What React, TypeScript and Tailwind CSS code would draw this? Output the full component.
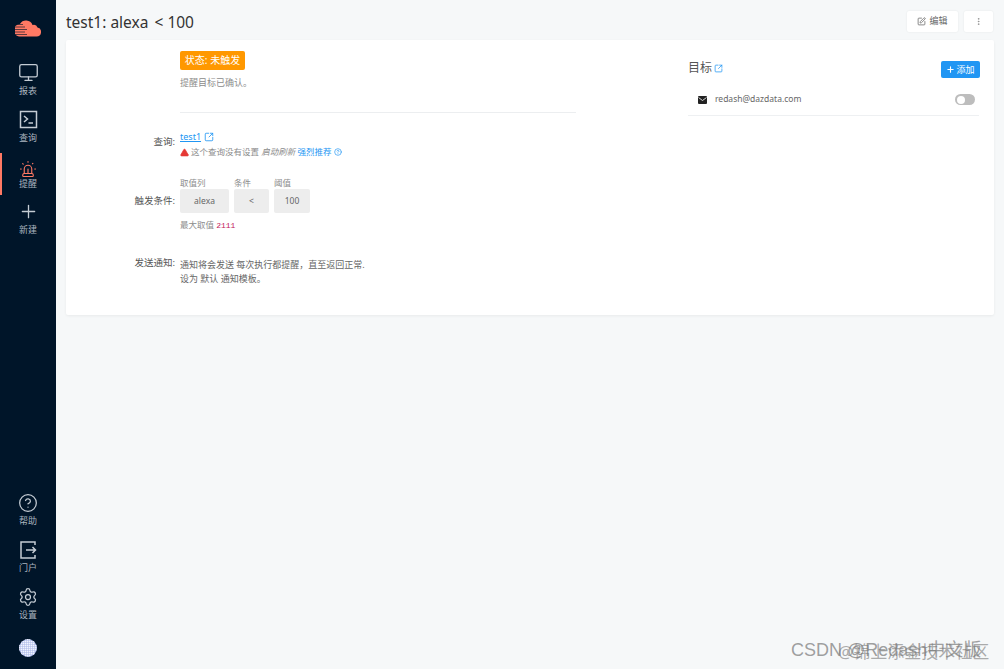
import { Monitor, Siren, Plus, CircleHelp, Settings, SquareArrowOutUpRight, SquarePen, EllipsisVertical, TriangleAlert } from 'lucide-react';

const font = { fontFamily: '"Noto Sans", "Noto Sans CJK SC", sans-serif' };

function CloudLogo() {
  return (
    <svg width="26" height="18" viewBox="0 0 26 18">
      <path d="M4 17.500h17.500a4.500 4.500 0 0 0 1-8.900 4 4 0 0 0-5-2.600A7 7 0 0 0 5 5a6.300 6.300 0 0 0-1 12.500z" fill="#ff7964" />
      <g stroke="#001529" strokeWidth="0.800" opacity="0.8">
        <path d="M0 5.500h8M0 8h10M0 10.500h12M0 13h10M0 15.500h12" />
      </g>
    </svg>
  );
}

function TerminalIcon() {
  return (
    <svg width="21" height="21" viewBox="0 0 21 21" fill="none" stroke="#c4ccd4" strokeWidth="1.500">
      <rect x="2.500" y="2.500" width="16" height="16" />
      <path d="M6 7l3.500 3L6 13M10.500 14H15" />
    </svg>
  );
}

function PortalIcon() {
  return (
    <svg width="20" height="20" viewBox="0 0 20 20" fill="none" stroke="#c4ccd4" strokeWidth="1.500">
      <path d="M17 5V2H3v16h14v-3" />
      <path d="M8 10h10M14.500 7l3 3-3 3" />
    </svg>
  );
}

function MailIcon() {
  return (
    <svg width="9" height="8" viewBox="0 0 9 8" className="shrink-0">
      <rect width="9" height="8" rx="1" fill="#222" />
      <path d="M0.500 1.500L4.500 4.500 8.500 1.500" fill="none" stroke="#fff" strokeWidth="0.800" />
    </svg>
  );
}

function Avatar() {
  const dots = [];
  for (let r = 0; r < 9; r++) {
    for (let c = 0; c < 9; c++) {
      const dx = c - 4;
      const dy = r - 4;
      if (dx * dx + dy * dy <= 18) dots.push(<rect key={`${r}-${c}`} x={c * 2} y={r * 2} width="1.500" height="1.500" fill="#f0f3ff" />);
    }
  }
  return (
    <div className="w-[18px] h-[18px] rounded-full bg-[#a9b6e6] overflow-hidden">
      <svg width="18" height="18" viewBox="0 0 18 18">{dots}</svg>
    </div>
  );
}

function NavItem({ icon, label, active, className }: { icon: React.ReactNode; label: string; active?: boolean; className?: string }) {
  return (
    <div className={`flex flex-col items-center justify-center border-l-2 pr-[2px] ${active ? 'border-[#ff7964]' : 'border-transparent'} ${className ?? 'h-[47px] gap-[2px]'}`}>
      {icon}
      <span className="text-[9px] leading-[11px] text-[#aab4bf]">{label}</span>
    </div>
  );
}

function FormRow({ label, className, labelClass, children }: { label: string; className?: string; labelClass?: string; children: React.ReactNode }) {
  return (
    <div className={`flex ${className ?? ''}`}>
      <div className={`w-[114px] pr-[5px] text-right text-[9.500px] text-[#555] ${labelClass ?? ''}`}>{label}</div>
      <div className="flex-1">{children}</div>
    </div>
  );
}

function ConditionBox({ title, value, width }: { title: string; value: string; width: string }) {
  return (
    <div className={width}>
      <div className="text-[8.500px] leading-[13px] text-[#8c8c8c]">{title}</div>
      <div className="h-[24px] bg-[#ededed] rounded-[2px] flex items-center justify-center text-[8.500px] text-[#666]">{value}</div>
    </div>
  );
}

export default function App() {
  return (
    <div className="relative flex w-[1004px] h-[669px] overflow-hidden bg-[#f6f8f9]" style={font}>
      <aside className="w-[56px] shrink-0 bg-[#001529] flex flex-col">
        <div className="h-[55px] flex items-center justify-center"><CloudLogo /></div>
        <NavItem icon={<Monitor size={21} strokeWidth={1.5} color="#c4ccd4" />} label="报表" />
        <NavItem icon={<TerminalIcon />} label="查询" />
        <NavItem active className="h-[42px] mt-[4px]" icon={<Siren size={18} strokeWidth={1.5} color="#ff7964" />} label="提醒" />
        <NavItem className="h-[46px] gap-[2px]" icon={<Plus size={21} strokeWidth={1.5} color="#c4ccd4" />} label="新建" />
        <div className="mt-auto">
          <NavItem icon={<CircleHelp size={20} strokeWidth={1.5} color="#c4ccd4" />} label="帮助" />
          <NavItem icon={<PortalIcon />} label="门户" />
          <NavItem icon={<Settings size={20} strokeWidth={1.5} color="#c4ccd4" />} label="设置" />
          <div className="h-[42px] flex items-center justify-center"><Avatar /></div>
        </div>
      </aside>

      <main className="flex-1 pl-[10px] pr-[10px]">
        <header className="h-[40px] flex items-center justify-between">
          <h1 className="pt-[6px] text-[15.500px] font-normal text-[#333]">test1: alexa<span className="ml-[2px]"> &lt; </span>100</h1>
          <div className="flex gap-[6px] pt-[2px] mr-[1px]">
            <div className="w-[51px] h-[21px] bg-white rounded-[2px] flex items-center justify-center gap-[3px] text-[9px] text-[#666] shadow-[0_0_2px_rgba(0,0,0,0.08)]">
              <SquarePen size={9} />编辑
            </div>
            <div className="w-[29px] h-[21px] bg-white rounded-[2px] flex items-center justify-center shadow-[0_0_2px_rgba(0,0,0,0.08)]">
              <EllipsisVertical size={9} color="#888" />
            </div>
          </div>
        </header>

        <section className="h-[275px] bg-white rounded-[2px] shadow-[0_1px_3px_rgba(0,0,0,0.06)] flex">
          <div className="w-[510px] pt-[11px]">
            <FormRow label="">
              <div className="w-[65px] h-[19px] bg-[#ff9800] rounded-[2px] flex items-center justify-center text-[10px] text-white">状态: 未触发</div>
              <p className="mt-[6px] text-[9px] leading-[14px] text-[#8c8c8c]">提醒目标已确认。</p>
              <div className="mt-[22px] h-px bg-[#eceef0]" />
            </FormRow>
            <FormRow label="查询:" labelClass="pt-[5px]" className="mt-[17px]">
              <div className="text-[9px] leading-[14px]">
                <div className="flex items-center gap-[3px] text-[#2196f3]"><span className="underline">test1</span><SquareArrowOutUpRight size={10} /></div>
                <div className="flex items-center gap-[2px] text-[8.500px] text-[#8c8c8c] mt-[1px]">
                  <TriangleAlert size={9} fill="#e53935" color="#e53935" />
                  <span>这个查询没有设置 <i>启动刷新</i> <span className="text-[#2196f3]">强烈推荐</span></span>
                  <CircleHelp size={8} color="#2196f3" className="ml-[1px]" />
                </div>
              </div>
            </FormRow>
            <FormRow label="触发条件:" labelClass="pt-[18px]" className="mt-[17px]">
              <div className="flex gap-[5px]">
                <ConditionBox title="取值列" value="alexa" width="w-[49px]" />
                <ConditionBox title="条件" value="<" width="w-[35px]" />
                <ConditionBox title="阈值" value="100" width="w-[36px]" />
              </div>
              <div className="mt-[6px] text-[8.500px] leading-[12px] text-[#8c8c8c]">最大取值 <span className="text-[#c2185b] font-mono text-[8px]">2111</span></div>
            </FormRow>
            <FormRow label="发送通知:" className="mt-[24px]">
              <p className="pt-[2px] text-[9px] leading-[14px] text-[#666]">通知将会发送 每次执行都提醒，直至返回正常.<br />设为 默认 通知模板。</p>
            </FormRow>
          </div>

          <div className="ml-[112px] w-[291px] pt-[20px]">
            <div className="flex justify-between">
              <div className="flex items-center gap-[2px] text-[12px] text-[#555] h-[16px]">目标<SquareArrowOutUpRight size={9} color="#2196f3" /></div>
              <div className="mt-[1px] mr-[-1px] w-[39px] h-[17px] bg-[#2196f3] rounded-[2px] flex items-center justify-center gap-[1px] text-[9px] text-white">
                <Plus size={9} strokeWidth={3} />添加
              </div>
            </div>
            <div className="mt-[12px] h-[26px] border-b border-[#eef0f2] flex items-center justify-between pl-[10px] pr-[4px] pb-[6px]">
              <div className="flex items-center gap-[8px] text-[8.500px] text-[#666]">
                <MailIcon />redash@dazdata.com
              </div>
              <div className="w-[20px] h-[11px] rounded-full bg-[#bdbdbd] p-[1.500px]"><div className="w-[8px] h-[8px] rounded-full bg-white" /></div>
            </div>
          </div>
        </section>
      </main>

      <div className="absolute left-[791px] top-[638px] text-[18px] leading-[24px] text-[#777]/70 whitespace-nowrap" style={{ fontFamily: '"Liberation Sans", "Noto Sans CJK SC", sans-serif' }}>CSDN @Redash中文版</div>
      <div className="absolute left-[838px] top-[641px] text-[17px] leading-[22px] text-[#777]/60 whitespace-nowrap">@锦上添金技术社区</div>
    </div>
  );
}
